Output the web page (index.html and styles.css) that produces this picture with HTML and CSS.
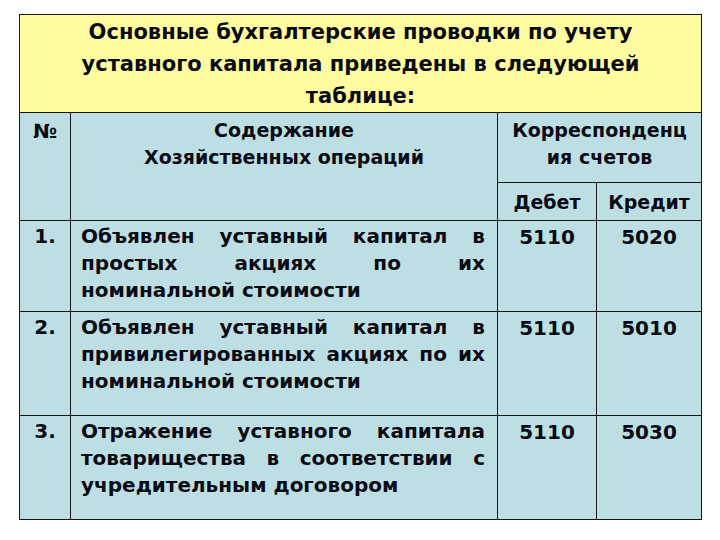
FILE: index.html
```html
<!DOCTYPE html>
<html lang="ru">
<head>
<meta charset="utf-8">
<link rel="stylesheet" href="styles.css">
</head>
<body>
<div class="page">
<table class="ledger">
  <colgroup>
    <col class="c-num">
    <col class="c-desc">
    <col class="c-deb">
    <col class="c-cred">
  </colgroup>
  <tr class="r-title">
    <td colspan="4" class="title">Основные бухгалтерские проводки по учету уставного капитала приведены в следующей таблице:</td>
  </tr>
  <tr class="r-head1">
    <td rowspan="2" class="hnum">№</td>
    <td rowspan="2" class="hdesc">Содержание<br>Хозяйственных операций</td>
    <td colspan="2" class="hcorr">Корреспонденц<br>ия счетов</td>
  </tr>
  <tr class="r-head2">
    <td class="hsub">Дебет</td>
    <td class="hsub">Кредит</td>
  </tr>
  <tr class="r-1">
    <td class="num">1.</td>
    <td class="desc">Объявлен уставный капитал в простых акциях по их номинальной стоимости</td>
    <td class="acc">5110</td>
    <td class="acc">5020</td>
  </tr>
  <tr class="r-2">
    <td class="num">2.</td>
    <td class="desc">Объявлен уставный капитал в привилегированных акциях по их номинальной стоимости</td>
    <td class="acc">5110</td>
    <td class="acc">5010</td>
  </tr>
  <tr class="r-3">
    <td class="num">3.</td>
    <td class="desc">Отражение уставного капитала товарищества в соответствии с учредительным договором</td>
    <td class="acc">5110</td>
    <td class="acc">5030</td>
  </tr>
</table>
</div>
</body>
</html>
```
FILE: styles.css
```css
html, body {
  margin: 0;
  padding: 0;
  background: #ffffff;
}
.page {
  padding: 14px 0 0 19px;
}
.ledger {
  border-collapse: collapse;
  table-layout: fixed;
  width: 682px;
  font-family: "DejaVu Sans", Verdana, sans-serif;
  font-weight: bold;
  color: #0b0b14;
  background: #bddfe3;
}
.ledger td {
  border: 1px solid #161616;
  padding: 0;
  vertical-align: top;
}
.c-num { width: 51px; }
.c-desc { width: 427px; }
.c-deb { width: 99px; }
.c-cred { width: 105px; }

.r-title { height: 97px; }
.title {
  background: #fffba0;
  text-align: center;
  font-size: 21px;
  line-height: 32px;
  padding: 1px 40px 0 40px !important;
}
.r-head1 { height: 70px; }
.r-head2 { height: 38px; }
.hnum {
  text-align: center;
  font-size: 20px;
  padding-top: 6px !important;
}
.hdesc, .hcorr {
  text-align: center;
  font-size: 19px;
  line-height: 27px;
  padding-top: 4px !important;
}
.hsub {
  text-align: center;
  vertical-align: middle !important;
  font-size: 19px;
}
.r-1 { height: 91px; }
.r-2 { height: 104px; }
.r-3 { height: 104px; }
.num {
  text-align: center;
  font-size: 20px;
  padding-top: 3px !important;
}
.desc {
  text-align: justify;
  font-size: 20px;
  line-height: 27px;
  padding: 2px 12px 0 10px !important;
}
.acc {
  text-align: center;
  font-size: 20px;
  padding-top: 4px !important;
}
```
